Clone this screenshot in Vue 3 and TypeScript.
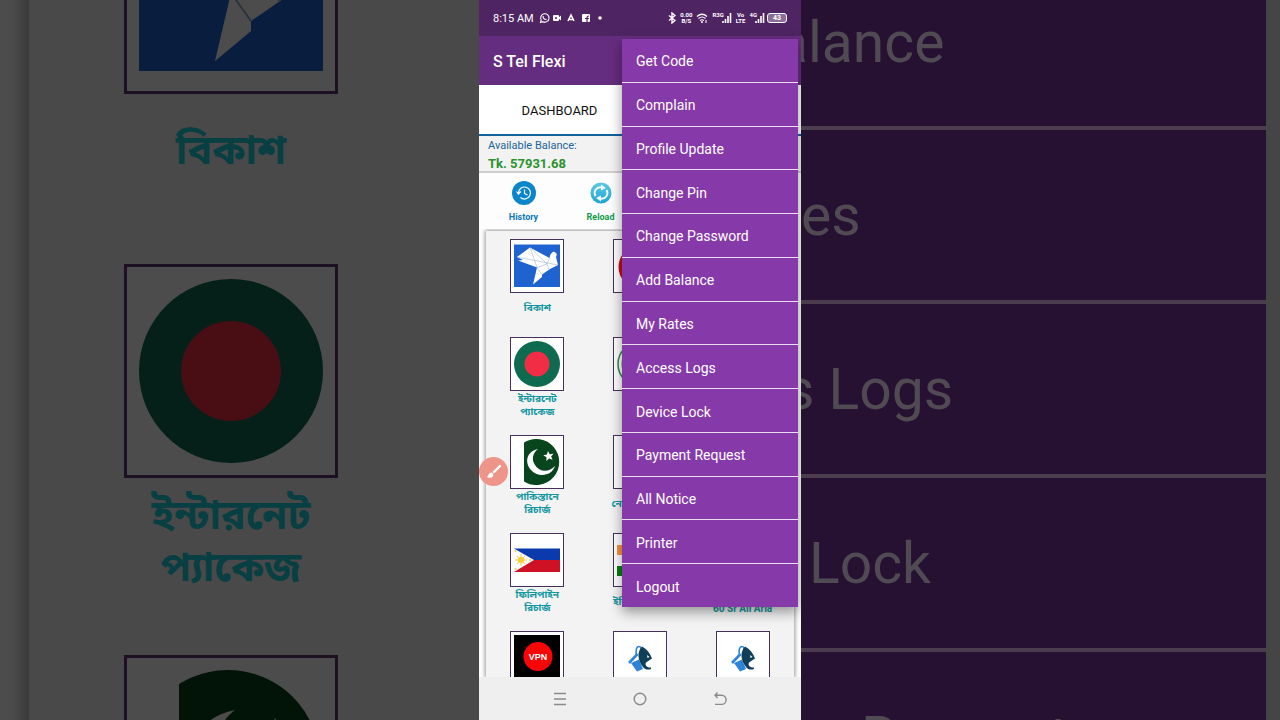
<script setup lang="ts">
interface AppTile {
  icon: string
  lines: string[]
  tail?: boolean
}

const menuItems: string[] = [
  'Get Code', 'Complain', 'Profile Update', 'Change Pin', 'Change Password', 'Add Balance', 'My Rates',
  'Access Logs', 'Device Lock', 'Payment Request', 'All Notice', 'Printer', 'Logout',
]

const tiles: (AppTile | null)[] = [
  { icon: 'bird', lines: ['বিকাশ'] },
  { icon: 'red', lines: [] },
  null,
  { icon: 'bangladesh', lines: ['ইন্টারনেট', 'প্যাকেজ'] },
  { icon: 'ring', lines: [] },
  null,
  { icon: 'pakistan', lines: ['পাকিস্তানে', 'রিচার্জ'] },
  { icon: 'blank', lines: ['নেপাল রিচার্জ'] },
  null,
  { icon: 'philippines', lines: ['ফিলিপাইন', 'রিচার্জ'] },
  { icon: 'india', lines: ['ইন্ডিয়া রিচার্জ'] },
  { icon: 'blank', lines: ['60 Sr All Aria'], tail: true },
  { icon: 'vpn', lines: [] },
  { icon: 'bucket', lines: [] },
  { icon: 'bucket', lines: [] },
]
</script>

<template>
  <svg class="defs" aria-hidden="true">
    <linearGradient id="reload-fill" x1="0" y1="0" x2="0" y2="1">
      <stop offset="0" stop-color="#5cc9e6" />
      <stop offset="1" stop-color="#1ea4d4" />
    </linearGradient>
    <symbol id="i-bird" viewBox="0 0 52 52">
      <rect x="3" y="4.500" width="46" height="42.500" fill="#1f63d0" />
      <path d="M6 17 19 7.500 38.500 18C39 14 41 12 43 11.500L46 14 45 17 47 25 39 29 31 34.500V37L22 44.500 26 27.500 7 20.500 12 20Z" fill="#fff" />
      <path d="M6 17 47 25M19 7.500 26 27.500 31 34.500M19 7.500 36 24 26 27.500M38.500 18 36 24 38 29.500" fill="none" stroke="#8ba6cc" stroke-width=".5" />
    </symbol>
    <symbol id="i-bangladesh" viewBox="0 0 52 52">
      <circle cx="26" cy="26" r="23" fill="#0e6b50" />
      <circle cx="26" cy="26" r="12.500" fill="#f02d44" />
    </symbol>
    <symbol id="i-pakistan" viewBox="0 0 52 52">
      <path d="M13 6.500A23 23 0 1 1 13 45.500Z" fill="#08441c" />
      <path d="M27 13C16 15 13 26 20 34C27 42 41 40 44 30C38 37 28 36 24 29C20 23 22 17 27 13Z" fill="#fff" />
      <path d="m37 15 1.700 3.200 3.800-.5-2.400 2.700 1.500 3.400-3.500-1.400-2.800 2.500.2-3.700-3.200-2 3.600-.8Z" fill="#fff" />
    </symbol>
    <symbol id="i-philippines" viewBox="0 0 52 52">
      <path d="M3 14.500H49V26H3Z" fill="#0b3aac" />
      <path d="M3 26H49V38H3Z" fill="#cf1126" />
      <path d="M3 14.500 23 26 3 38Z" fill="#fff" />
      <circle cx="10" cy="26" r="3" fill="#f4cd38" />
      <path d="M10 20V32M4 26H16M6 22 14 30M14 22 6 30" stroke="#f4cd38" stroke-width="1" />
      <circle cx="4.500" cy="17" r="1" fill="#f4cd38" /><circle cx="4.500" cy="35" r="1" fill="#f4cd38" /><circle cx="19.500" cy="26" r="1" fill="#f4cd38" />
    </symbol>
    <symbol id="i-india" viewBox="0 0 52 52">
      <path d="M3 11H49V21H3Z" fill="#f6963a" />
      <path d="M3 32H49V42H3Z" fill="#078010" />
    </symbol>
    <symbol id="i-red" viewBox="0 0 52 52">
      <circle cx="26" cy="27" r="21.500" fill="#c30e12" />
    </symbol>
    <symbol id="i-ring" viewBox="0 0 52 52">
      <circle cx="26" cy="26" r="22" fill="#fff" stroke="#2f8f3c" stroke-width="1.500" />
      <circle cx="26" cy="26" r="18" fill="#e4efe4" stroke="#2f8f3c" stroke-width="1" />
    </symbol>
    <symbol id="i-vpn" viewBox="0 0 52 52">
      <rect x="3" y="3" width="46" height="46" fill="#000" />
      <circle cx="27" cy="24.500" r="14.500" fill="#fa0505" />
      <text x="27" y="28" text-anchor="middle" font-family="Liberation Sans, sans-serif" font-size="9" font-weight="700" fill="#fff">VPN</text>
    </symbol>
    <symbol id="i-bucket" viewBox="0 0 52 52">
      <path d="M15 31 23.500 22" stroke="#2d84d6" stroke-width="2.600" fill="none" />
      <path d="M22.500 23C21.500 18 22.500 14.500 25 14.500C27 14.500 27.500 16 27.500 20" stroke="#2d84d6" stroke-width="1.600" fill="none" />
      <path d="m17 31 8-3.500 4 9.500-6 2.500Z" fill="#2d84d6" />
      <path d="M28 14.500C33 17 36 21 38 26.500L32 30.500C30.500 33 33 36 37 35.500V37C33.500 38.500 30 37 29 35C24 29 22.500 20 28 14.500Z" fill="#0f4058" />
      <path d="m33 23 2.500 2-2 1Z" fill="#fff" />
    </symbol>
    <symbol id="i-blank" viewBox="0 0 52 52" />
  </svg>

  <div class="stage">
    <div class="backdrop left" aria-hidden="true">
      <div class="big-panel">
        <div class="big-tile cut"><svg><use href="#i-bird" /></svg></div>
        <p class="big-label one">বিকাশ</p>
        <div class="big-tile"><svg><use href="#i-bangladesh" /></svg></div>
        <p class="big-label">ইন্টারনেট<br />প্যাকেজ</p>
        <div class="big-tile"><svg><use href="#i-pakistan" /></svg></div>
      </div>
    </div>

    <main class="phone">
      <header class="status">
        <span class="clock">8:15 AM</span>
        <svg class="s-left" viewBox="0 0 66 12" aria-hidden="true">
          <g fill="none" stroke="#fff" stroke-width="1.100">
            <path d="M1.500 10.500 2.200 8A4.200 4.200 0 1 1 4 9.700Z" />
            <path d="M4 4C4 6 5.500 7.500 7.500 7.500" />
          </g>
          <rect x="14" y="3" width="6" height="6" rx="1" fill="#fff" /><path d="m19 6 3-2.500v5Z" fill="#fff" /><circle cx="17" cy="6" r="1" fill="#4f2463" />
          <path d="M29 9 32 3 35 9M30 7.500H34" stroke="#fff" stroke-width="1.600" fill="none" />
          <rect x="43" y="2" width="8" height="8" rx="1" fill="#fff" />
          <path d="M48 10V5.500Q48 4 50 4M46 6.500H50" stroke="#4f2463" stroke-width="1.200" fill="none" />
          <circle cx="61" cy="6" r="1.800" fill="#fff" />
        </svg>
        <span class="spacer"></span>
        <svg class="s-bt" viewBox="0 0 8 12" aria-hidden="true"><path d="M1 3.500 7 8.500 4 11V1L7 3.500 1 8.500" fill="none" stroke="#fff" stroke-width="1.400" /></svg>
        <span class="tiny">0.00<br />B/S</span>
        <svg class="s-wifi" viewBox="0 0 12 12" aria-hidden="true"><path d="M1 4.500Q6 0 11 4.500M2.500 6.500Q6 3.500 9.500 6.500M4 8.500Q6 7 8 8.500" fill="none" stroke="#fff" stroke-width="1.200" /><circle cx="6" cy="10" r="1" fill="#fff" /><path d="M10 8V11" stroke="#fff" /></svg>
        <span class="tiny net">R3G</span>
        <svg class="s-bars" viewBox="0 0 10 12" aria-hidden="true"><path d="M1 11V9M3.500 11V7M6 11V4M8.500 11V1" stroke="#fff" stroke-width="1.600" /></svg>
        <span class="tiny volte">Vo<br />LTE</span>
        <span class="tiny net">4G</span>
        <svg class="s-bars" viewBox="0 0 10 12" aria-hidden="true"><path d="M1 11V9M3.500 11V7M6 11V4M8.500 11V1" stroke="#fff" stroke-width="1.600" /></svg>
        <span class="battery">43</span>
      </header>

      <div class="appbar"><h1>S Tel Flexi</h1></div>
      <div class="tabs"><button type="button" class="tab">DASHBOARD</button></div>
      <section class="balance">
        <p class="caption">Available Balance:</p>
        <p class="amount">Tk. 57931.68</p>
      </section>
      <div class="quick">
        <button type="button" class="action history">
          <svg viewBox="0 0 24 24" aria-hidden="true"><circle cx="12" cy="12" r="12" fill="#0b86cb" /><path d="M6.500 12A6 6 0 1 1 8.500 16.500M4.500 10.500 6.500 13 8.800 10.500M12.500 8.500V12.500L15.500 14" fill="none" stroke="#fff" stroke-width="1.200" /></svg>
          <span>History</span>
        </button>
        <button type="button" class="action reload">
          <svg viewBox="0 0 24 24" aria-hidden="true"><circle cx="12" cy="12" r="10.500" fill="url(#reload-fill)" /><path d="M6.500 15C4 10 7.500 5.500 13 6.500M17.500 9C20 14 16.500 18.500 11 17.500" fill="none" stroke="#f2fbfe" stroke-width="2" /><path d="m12 3.500 5 3.500-5 2.500ZM12 20.500l-5-3.500 5-2.500Z" fill="#f2fbfe" /></svg>
          <span>Reload</span>
        </button>
      </div>

      <section class="panel">
        <div v-for="(tile, i) in tiles" :key="i" class="cell">
          <template v-if="tile">
            <button type="button" class="tile" :aria-label="tile.lines.join(' ') || tile.icon">
              <svg><use :href="'#i-' + tile.icon" /></svg>
            </button>
            <p class="label" :class="{ tail: tile.tail }">
              <span v-for="line in tile.lines" :key="line">{{ line }}</span>
            </p>
          </template>
        </div>
      </section>

      <nav class="navbar">
        <button type="button" aria-label="Recent apps"><svg viewBox="0 0 16 16"><path d="M2 2.500H14M2 8H14M2 13.500H14" /></svg></button>
        <button type="button" aria-label="Home"><svg viewBox="0 0 16 16"><circle cx="8" cy="8" r="5.800" /></svg></button>
        <button type="button" aria-label="Back"><svg viewBox="0 0 16 16"><path d="M5.500 1.500 3 4.200 5.500 7M3 4.200H9.500A4.600 4.600 0 0 1 9.500 13.400H3" /></svg></button>
      </nav>

      <button type="button" class="brush" aria-label="Brush">
        <svg viewBox="0 0 16 16"><path d="M14 2 8 8" stroke="#fff" stroke-width="2.400" stroke-linecap="round" /><path d="M5.500 8.500C8 9.500 8 12.500 5.500 13.500C3.500 14.200 1.500 13.500 1 12.500C3 12.500 2 8.500 5.500 8.500Z" fill="#fff" /></svg>
      </button>

      <ul class="menu">
        <li v-for="item in menuItems" :key="item"><button type="button">{{ item }}</button></li>
      </ul>
    </main>

    <div class="backdrop right" aria-hidden="true">
      <div class="big-row"><span>alance</span></div>
      <div class="big-row"><span>es</span></div>
      <div class="big-row"><span>s Logs</span></div>
      <div class="big-row"><span>Lock</span></div>
      <div class="big-row"><span>Request</span></div>
    </div>
  </div>
</template>

<style>
body { margin: 0; background: #4a4a4a; }
</style>

<style scoped>
* { box-sizing: border-box; }
p, h1, ul { margin: 0; padding: 0; }
button { border: 0; padding: 0; background: none; font: inherit; color: inherit; cursor: pointer; }
svg { display: block; }
.defs { position: absolute; width: 0; height: 0; }

.stage {
  display: grid;
  grid-template-columns: 1fr 322px 1fr;
  height: 100vh;
  overflow: hidden;
  font-family: Roboto, "Noto Sans Bengali", "Noto Sans", sans-serif;
}

.backdrop { overflow: hidden; min-width: 0; }
.left { padding-left: 29px; background: linear-gradient(90deg, #4c4c4c 0, #4b4b4b 12px, #3a3a3a 29px); }
.big-panel { display: flow-root; height: 100%; padding-left: 95px; background: #494949; }
.big-tile { width: 214px; height: 214px; border: 3px solid #1c1022; background: #4c4c4c; }
.big-tile svg { width: 208px; height: 208px; filter: brightness(0.3); }
.big-tile.cut { margin-top: -120px; }
.big-label {
  display: flex;
  align-items: center;
  justify-content: center;
  width: 214px;
  height: 177px;
  padding-bottom: 52px;
  text-align: center;
  font-size: 41px;
  font-weight: 700;
  line-height: 52px;
  color: #073f42;
}
.big-label.one { height: 170px; padding-bottom: 58px; }

.right { border-right: 14px solid #454545; background: #271132; }
.big-row {
  display: flex;
  align-items: center;
  height: 174px;
  border-bottom: 4px solid #4b3d4e;
  font-size: 57px;
  color: #504a52;
}
.big-row:first-child { height: 130px; }
.big-row:first-child span { margin-left: -24px; padding-bottom: 42px; }
.big-row:nth-child(3) span { margin-left: -16px; }
.big-row:nth-child(4) span { margin-left: 8px; }
.big-row:nth-child(5) span { margin-left: 60px; }

.phone {
  position: relative;
  display: flex;
  flex-direction: column;
  height: 100vh;
  overflow: hidden;
  background: #fdfdfd;
}
.status {
  display: flex;
  align-items: center;
  flex: none;
  height: 36px;
  padding: 0 14px;
  background: #4f2463;
  color: #fff;
  font-size: 11px;
}
.clock { white-space: nowrap; }
.s-left { width: 66px; height: 12px; margin-left: 5px; }
.spacer { flex: 1; }
.s-bt { width: 8px; height: 12px; }
.tiny { margin-left: 4px; font-size: 6px; line-height: 6px; font-weight: 700; text-align: center; }
.s-wifi { width: 12px; height: 12px; margin-left: 4px; }
.net { align-self: flex-start; margin-top: 12px; }
.s-bars { width: 10px; height: 12px; margin-left: -2px; }
.battery {
  width: 20px;
  height: 10px;
  margin-left: 2px;
  border: 1px solid #fff;
  border-radius: 3px;
  background: #8b6f98;
  font-size: 7px;
  line-height: 8px;
  font-weight: 700;
  text-align: center;
}
.appbar { display: flex; align-items: center; flex: none; height: 49px; padding: 2px 14px 0; background: #652d80; }
.appbar h1 { font-size: 16px; line-height: 20px; font-weight: 500; color: #fff; }
.tabs { display: flex; flex: none; height: 51px; padding-top: 2px; border-bottom: 2px solid #12629c; background: #fff; }
.tab { width: 50%; font-size: 13px; color: #111; }
.balance { flex: none; height: 37px; padding: 3px 9px 0; border-bottom: 2px solid #cfcfcf; background: #f2f2f2; }
.caption { font-size: 11px; line-height: 14px; color: #1c649a; }
.amount { font-size: 13px; line-height: 21px; font-weight: 700; color: #2b922e; }
.quick { display: flex; flex: none; height: 57px; padding: 8px 0 0 6px; }
.action { display: flex; flex-direction: column; align-items: center; gap: 7px; width: 77px; font-size: 9px; line-height: 10px; font-weight: 700; }
.action svg { width: 24px; height: 24px; }
.history { color: #0b78b8; }
.reload { color: #149a4a; }

.panel {
  display: grid;
  grid-template-columns: repeat(3, 1fr);
  grid-auto-rows: 98px;
  flex: 1;
  min-height: 0;
  margin: 1px 7px 0;
  padding-top: 8px;
  overflow: hidden;
  background: #f3f3f3;
  box-shadow: 0 0 4px 1px #999;
  clip-path: inset(-2px -7px 0);
}
.cell { display: flex; flex-direction: column; align-items: center; }
.tile { width: 54px; height: 54px; border: 1px solid #46305a; background: #fff; }
.tile svg { width: 52px; height: 52px; }
.label {
  display: flex;
  flex-direction: column;
  justify-content: center;
  height: 28px;
  text-align: center;
  white-space: nowrap;
  font-size: 10px;
  line-height: 13px;
  font-weight: 700;
  color: #12979f;
}
.label.tail { justify-content: flex-end; }

.navbar { display: flex; align-items: center; justify-content: center; gap: 64px; flex: none; height: 43px; background: #efefef; }
.navbar svg { width: 16px; height: 16px; fill: none; stroke: #8b8b8b; stroke-width: 1.400; }

.brush {
  position: absolute;
  left: 0;
  top: 457px;
  display: grid;
  place-items: center;
  width: 29px;
  height: 29px;
  border-radius: 50%;
  background: #ee9488;
}
.brush svg { width: 16px; height: 16px; }

.menu {
  position: absolute;
  top: 39px;
  right: 3px;
  display: flex;
  flex-direction: column;
  width: 176px;
  height: 568px;
  list-style: none;
  background: #863aa9;
  box-shadow: 0 5px 12px rgba(0, 0, 0, 0.4);
}
.menu li { flex: 1; display: flex; border-bottom: 1px solid #ecdcf2; }
.menu li:last-child { border-bottom: 0; }
.menu button { flex: 1; padding: 2px 14px 0; text-align: left; font-size: 14px; color: #fff; }
</style>
